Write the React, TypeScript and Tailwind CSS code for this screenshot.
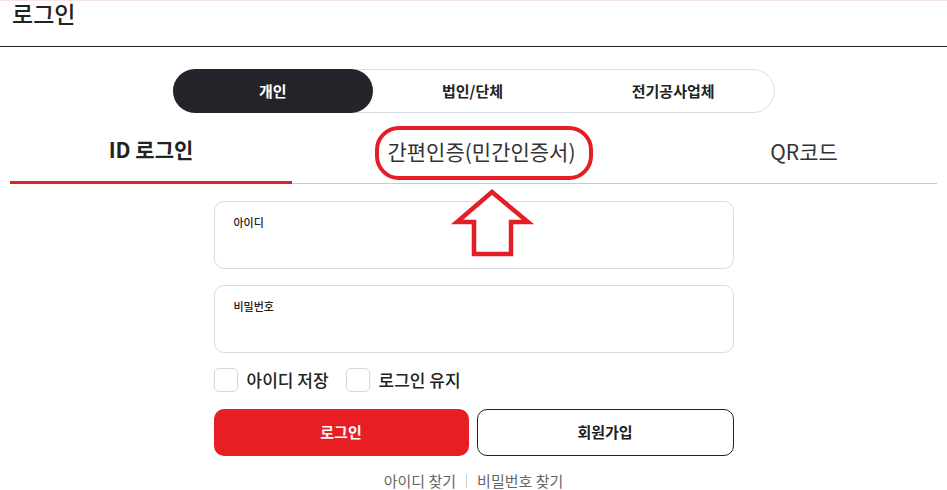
import { useState } from "react";

export default function App() {
  const [member, setMember] = useState("개인");
  const [tab, setTab] = useState("id");
  const [saveId, setSaveId] = useState(false);
  const [keep, setKeep] = useState(false);

  const font = { fontFamily: '"Noto Sans CJK KR", "Noto Sans", sans-serif' };

  return (
    <div className="relative min-h-[490px] w-[947px] bg-white text-[#222]" style={font}>
      <div className="h-px bg-[#f6e3e6]" />
      <div className="h-[46px] border-b border-[#222] px-[12px]">
        <h1 className="text-[23px] font-medium leading-[24px]">로그인</h1>
      </div>

      <div className="mx-auto mt-[22px] flex h-[44px] w-[602px] rounded-full border border-[#dcdde3]">
        {["개인", "법인/단체", "전기공사업체"].map((m) => (
          <button
            key={m}
            onClick={() => setMember(m)}
            className={
              member === m
                ? "-m-px flex-1 rounded-full bg-[#24252b] text-[15px] font-bold text-white"
                : "flex-1 text-[15px] font-bold text-[#222]"
            }
          >
            {m}
          </button>
        ))}
      </div>

      <div className="px-[10px]">
        <div className="flex border-b border-[#c8ccd2]">
          <button
            onClick={() => setTab("id")}
            className={
              tab === "id"
                ? "-mb-px flex h-[71px] w-[282px] items-center justify-center border-b-[3px] border-[#e41e26] pt-[5px] text-[21px] font-bold"
                : "flex h-[70px] w-[282px] items-center justify-center pt-[8px] text-[21px]"
            }
          >
            ID 로그인
          </button>
          <button
            onClick={() => setTab("easy")}
            className="flex h-[70px] w-[379px] items-center justify-center pt-[8px] text-[21px] text-[#333]"
          >
            간편인증(민간인증서)
          </button>
          <button
            onClick={() => setTab("qr")}
            className="flex h-[70px] flex-1 items-center justify-center pt-[8px] text-[21px] text-[#333]"
          >
            QR코드
          </button>
        </div>

        <div className="mx-auto w-[520px] pt-[17px]">
          <label className="block h-[68px] rounded-[10px] border border-[#d9dbe3] px-[19px] pt-[12px]">
            <span className="block text-[11px] font-medium leading-[16px]">아이디</span>
            <input className="w-full bg-transparent text-[14px] outline-none" />
          </label>
          <label className="mt-[16px] block h-[68px] rounded-[10px] border border-[#d9dbe3] px-[19px] pt-[12px]">
            <span className="block text-[11px] font-medium leading-[16px]">비밀번호</span>
            <input type="password" className="w-full bg-transparent text-[14px] outline-none" />
          </label>

          <div className="mt-[15px] flex h-[24px] items-center">
            <button onClick={() => setSaveId(!saveId)} className="flex items-center gap-[9px]">
              <span
                className={
                  saveId
                    ? "h-[24px] w-[24px] rounded-[5px] border border-[#e41e26] bg-[#e41e26]"
                    : "h-[24px] w-[24px] rounded-[5px] border border-[#d2d5dc]"
                }
              />
              <span className="text-[17px] font-medium">아이디 저장</span>
            </button>
            <button onClick={() => setKeep(!keep)} className="ml-[17px] flex items-center gap-[9px]">
              <span
                className={
                  keep
                    ? "h-[24px] w-[24px] rounded-[5px] border border-[#e41e26] bg-[#e41e26]"
                    : "h-[24px] w-[24px] rounded-[5px] border border-[#d2d5dc]"
                }
              />
              <span className="text-[17px] font-medium">로그인 유지</span>
            </button>
          </div>

          <div className="mt-[17px] flex gap-[8px]">
            <button className="h-[47px] flex-1 rounded-[10px] bg-[#e81e25] text-[15px] font-bold text-white">
              로그인
            </button>
            <button className="h-[47px] flex-1 rounded-[10px] border-[1.5px] border-[#222] text-[15px] font-bold">
              회원가입
            </button>
          </div>

          <div className="mt-[16px] flex items-center justify-center gap-[10px] text-[15px] leading-[18px] text-[#666]">
            <a href="#">아이디 찾기</a>
            <span className="h-[14px] w-px bg-[#d0d0d0]" />
            <a href="#">비밀번호 찾기</a>
          </div>
        </div>
      </div>

      {/* annotation overlay */}
      <div className="pointer-events-none absolute left-[375px] top-[126px] h-[54px] w-[218px] rounded-[24px] border-[4px] border-[#e41e26]" />
      <svg
        className="pointer-events-none absolute left-0 top-0"
        width="947"
        height="490"
        viewBox="0 0 947 490"
      >
        <polygon
          points="492,192 457,222 474,222 474,254 511,254 511,222 528,222"
          fill="white"
          stroke="#e41e26"
          strokeWidth="4.5"
          strokeLinejoin="miter"
        />
      </svg>
    </div>
  );
}
